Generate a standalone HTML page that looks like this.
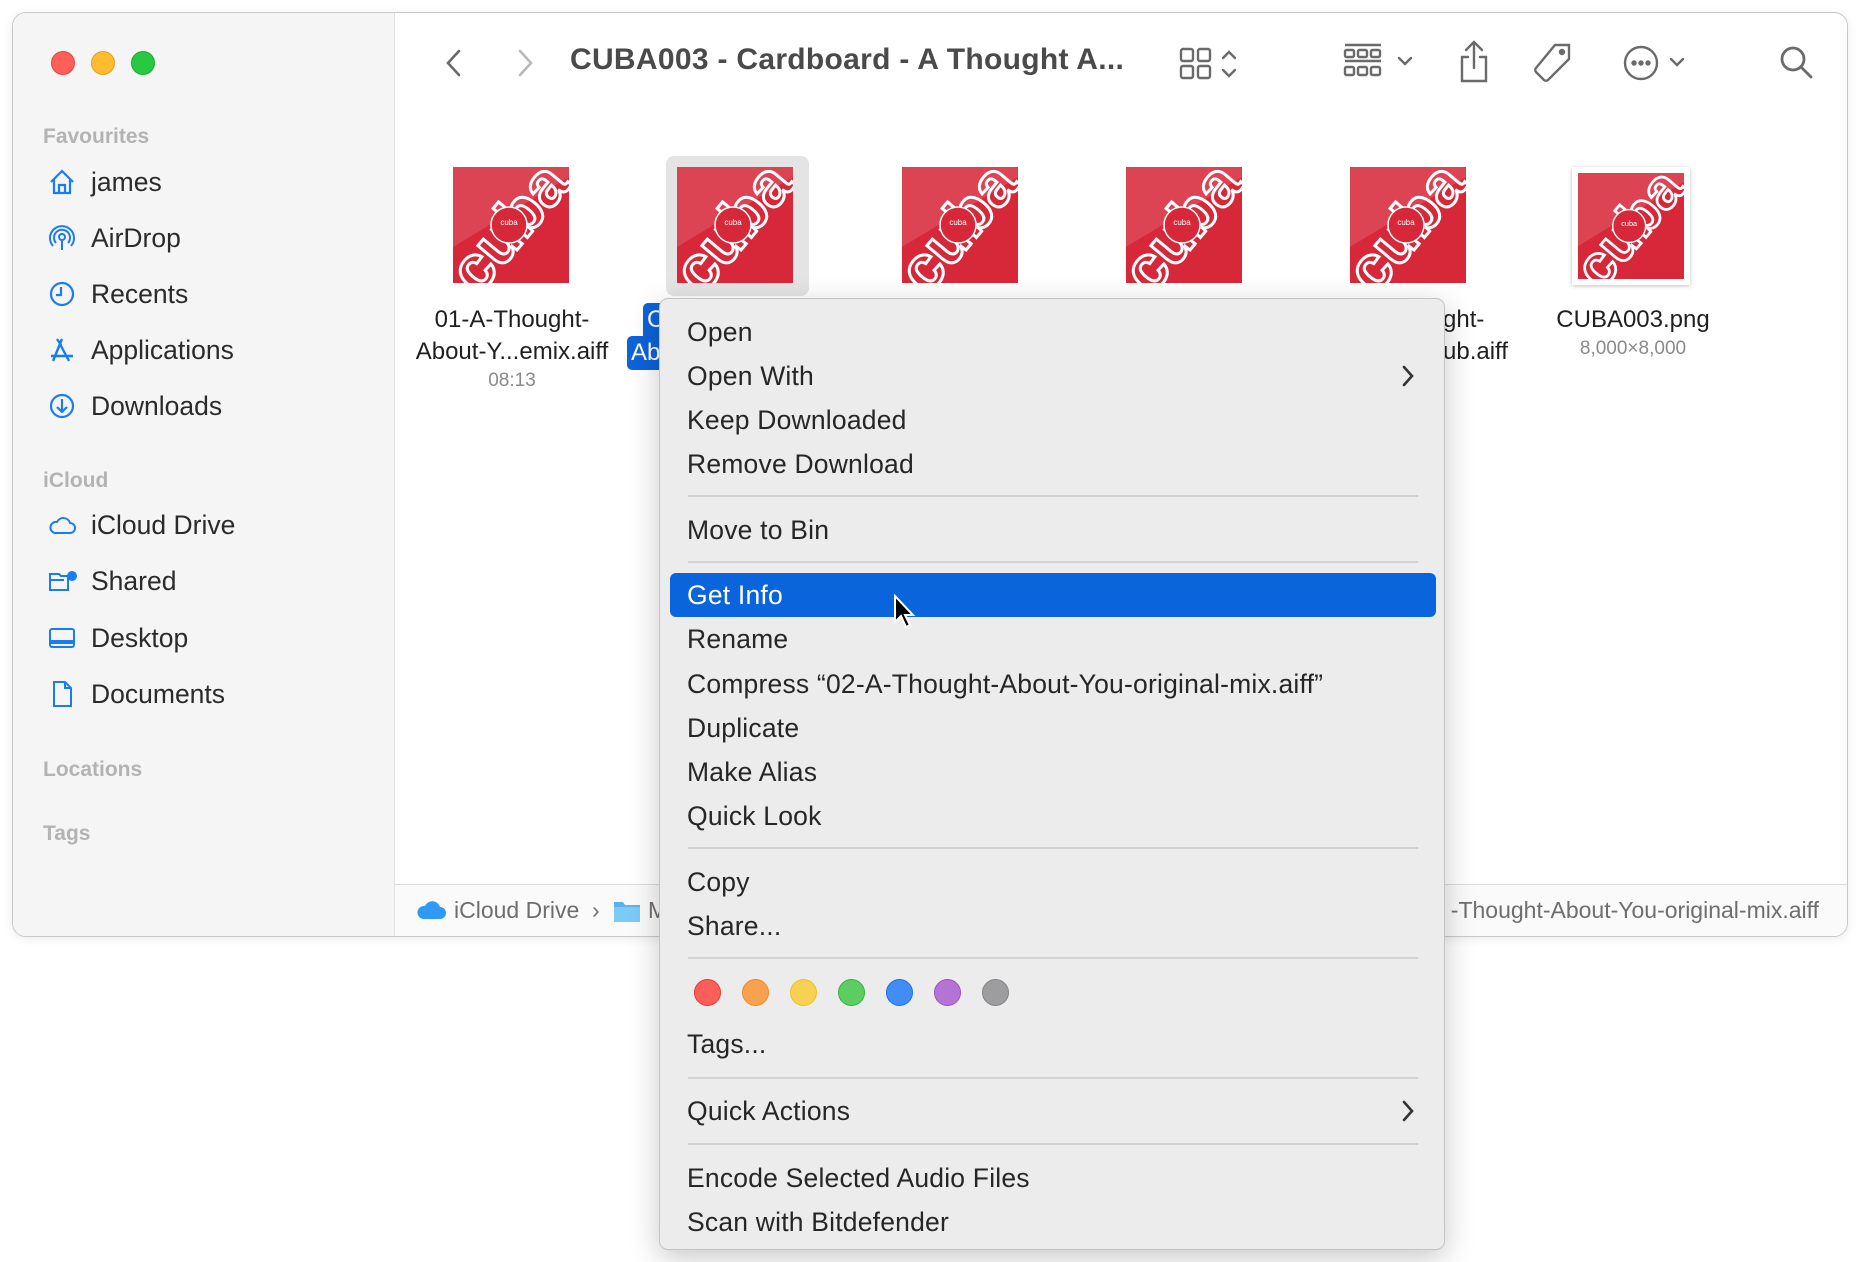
<!DOCTYPE html>
<html><head><meta charset="utf-8"><style>
*{margin:0;padding:0;box-sizing:border-box}
body{width:1860px;height:1262px;background:#fff;font-family:"Liberation Sans",sans-serif;position:relative;overflow:hidden;color:#262626}
.abs{position:absolute}
.win{left:12px;top:12px;width:1836px;height:925px;border:1px solid #c9c9c9;border-radius:14px;background:#fff;overflow:hidden;box-shadow:0 2px 10px rgba(0,0,0,.08)}
.side{left:0;top:0;width:382px;height:925px;background:#f5f5f5;border-right:1px solid #e2e2e2}
.dot{width:24px;height:24px;border-radius:50%}
.sh{font-size:21px;font-weight:bold;color:#b3b3b3;left:30px}
.si{font-size:26.5px;color:#2b2b2b;left:78px;line-height:30px}
.ic{left:34px;width:30px;height:30px}
.lbl{font-size:24px;color:#1f1f1f;text-align:center;line-height:32px}
.mi{position:absolute;left:27px;font-size:26.5px;letter-spacing:0.2px;line-height:30px;color:#262626}
.sep{position:absolute;left:28px;width:730px;height:2px;background:#d2d2d2}
.cd{position:absolute;width:27px;height:27px;border-radius:50%;top:979px}
</style></head><body>
<div class="abs win">
 <div class="abs side">
  <div class="abs dot" style="left:38px;top:38px;background:#fe5f57;border:1px solid #e0443e"></div>
  <div class="abs dot" style="left:78px;top:38px;background:#febc2e;border:1px solid #dea123"></div>
  <div class="abs dot" style="left:118px;top:38px;background:#28c840;border:1px solid #1aab29"></div>
  <div class="abs sh" style="top:112px">Favourites</div>
  <svg class="abs ic" style="top:154px" viewBox="0 0 30 30" fill="none" stroke="#1a7cf4" stroke-width="2.2"><path d="M4 15 L15 4 L26 15 M7 12 V26 H23 V12 M12 26 V18 H18 V26"/></svg>
  <div class="abs si" style="top:154px">james</div>
  <svg class="abs ic" style="top:210px" viewBox="0 0 30 30" fill="none" stroke="#1a7cf4" stroke-width="2"><circle cx="15" cy="14" r="3"/><path d="M9 20a8 8 0 1 1 12 0M6 23a12 12 0 1 1 18 0M15 17v10"/></svg>
  <div class="abs si" style="top:210px">AirDrop</div>
  <svg class="abs ic" style="top:266px" viewBox="0 0 30 30" fill="none" stroke="#1a7cf4" stroke-width="2.2"><circle cx="15" cy="15" r="11"/><path d="M14 8v8H9"/></svg>
  <div class="abs si" style="top:266px">Recents</div>
  <svg class="abs ic" style="top:322px" viewBox="0 0 30 30" fill="none" stroke="#1a7cf4" stroke-width="2.4"><path d="M15 4L6 26M13 9l9 17M4 21h22M10 4l4 6"/></svg>
  <div class="abs si" style="top:322px">Applications</div>
  <svg class="abs ic" style="top:378px" viewBox="0 0 30 30" fill="none" stroke="#1a7cf4" stroke-width="2.2"><circle cx="15" cy="15" r="11"/><path d="M15 8v13M10 16l5 5 5-5"/></svg>
  <div class="abs si" style="top:378px">Downloads</div>
  <div class="abs sh" style="top:456px">iCloud</div>
  <svg class="abs ic" style="top:497px" viewBox="0 0 30 30" fill="none" stroke="#1a7cf4" stroke-width="2"><path d="M8 23h15a5 5 0 0 0 0-10 7 7 0 0 0-13-1 5.5 5.5 0 0 0-2 11z"/></svg>
  <div class="abs si" style="top:497px">iCloud Drive</div>
  <svg class="abs ic" style="top:553px" viewBox="0 0 30 30" fill="none" stroke="#1a7cf4" stroke-width="2"><path d="M3 8h9l2 2h7v14H3zM3 14h14"/><circle cx="25" cy="10" r="4" fill="#1a7cf4"/></svg>
  <div class="abs si" style="top:553px">Shared</div>
  <svg class="abs ic" style="top:610px" viewBox="0 0 30 30" fill="none" stroke="#1a7cf4" stroke-width="2"><rect x="3" y="6" width="24" height="18" rx="2"/><path d="M3 19h24" stroke-width="4"/></svg>
  <div class="abs si" style="top:610px">Desktop</div>
  <svg class="abs ic" style="top:666px" viewBox="0 0 30 30" fill="none" stroke="#1a7cf4" stroke-width="2"><path d="M7 3h11l6 6v18H7zM18 3v6h6"/></svg>
  <div class="abs si" style="top:666px">Documents</div>
  <div class="abs sh" style="top:745px">Locations</div>
  <div class="abs sh" style="top:809px">Tags</div>
 </div>
 <svg class="abs" style="left:426px;top:32px" width="30" height="36" viewBox="0 0 30 36" fill="none" stroke="#6a6a6a" stroke-width="2.6" stroke-linecap="round"><path d="M20 6L9 18l11 12"/></svg>
 <svg class="abs" style="left:497px;top:32px" width="30" height="36" viewBox="0 0 30 36" fill="none" stroke="#b8b8b8" stroke-width="2.6" stroke-linecap="round"><path d="M10 6l11 12-11 12"/></svg>
 <div class="abs" style="left:557px;top:30px;font-size:30px;font-weight:bold;color:#4a4a4a;letter-spacing:0.3px">CUBA003 - Cardboard - A Thought A...</div>
 <svg class="abs" style="left:1166px;top:32px" width="90" height="40" viewBox="0 0 90 40" fill="none" stroke="#6a6a6a" stroke-width="2.4"><rect x="2" y="4" width="12" height="12" rx="2"/><rect x="19" y="4" width="12" height="12" rx="2"/><rect x="2" y="21" width="12" height="12" rx="2"/><rect x="19" y="21" width="12" height="12" rx="2"/><path d="M44 13l6-6 6 6M44 25l6 6 6-6" stroke-linecap="round"/></svg>
 <svg class="abs" style="left:1330px;top:28px" width="90" height="44" viewBox="0 0 90 44" fill="none" stroke="#6a6a6a" stroke-width="2.4"><path d="M2 4h36M2 20h36"/><rect x="2" y="9" width="9" height="7" rx="1.5"/><rect x="15" y="9" width="9" height="7" rx="1.5"/><rect x="28" y="9" width="9" height="7" rx="1.5"/><rect x="2" y="26" width="9" height="8" rx="1.5"/><rect x="15" y="26" width="9" height="8" rx="1.5"/><rect x="28" y="26" width="9" height="8" rx="1.5"/><path d="M56 17l6 6 6-6" stroke-linecap="round"/></svg>
 <svg class="abs" style="left:1444px;top:26px" width="34" height="46" viewBox="0 0 34 46" fill="none" stroke="#6a6a6a" stroke-width="2.4" stroke-linecap="round"><path d="M17 3v26M9 11l8-8 8 8M11 18H5v24h24V18h-6"/></svg>
 <svg class="abs" style="left:1518px;top:28px" width="44" height="44" viewBox="0 0 44 44" fill="none" stroke="#6a6a6a" stroke-width="2.4"><path d="M24 4h14v14L17 39a3 3 0 0 1-4 0L5 31a3 3 0 0 1 0-4z"/><circle cx="31" cy="11" r="2" fill="#6a6a6a"/></svg>
 <svg class="abs" style="left:1606px;top:28px" width="90" height="44" viewBox="0 0 90 44" fill="none" stroke="#6a6a6a" stroke-width="2.4"><circle cx="22" cy="22" r="16"/><circle cx="15" cy="22" r="1.5" fill="#6a6a6a"/><circle cx="22" cy="22" r="1.5" fill="#6a6a6a"/><circle cx="29" cy="22" r="1.5" fill="#6a6a6a"/><path d="M52 18l6 6 6-6" stroke-linecap="round"/></svg>
 <svg class="abs" style="left:1764px;top:30px" width="40" height="40" viewBox="0 0 40 40" fill="none" stroke="#6a6a6a" stroke-width="2.8" stroke-linecap="round"><circle cx="16" cy="16" r="11"/><path d="M24 24l10 10"/></svg>
 <div class="abs" style="left:653px;top:143px;width:143px;height:140px;background:#e4e4e4;border-radius:8px"></div>
 <div class="abs lbl" style="left:394px;top:291px;width:210px">01-A-Thought-<br>About-Y...emix.aiff</div>
 <div class="abs" style="left:399px;top:357px;width:200px;text-align:center;font-size:19px;color:#8a8a8a">08:13</div>
 <div class="abs" style="left:630px;top:290px;width:30px;height:34px;background:#0d63d9;border-radius:5px 5px 0 0;color:#fff;font-size:24px;line-height:34px;padding-left:4px">C</div>
 <div class="abs" style="left:614px;top:323px;width:46px;height:34px;background:#0d63d9;border-radius:5px;color:#fff;font-size:24px;line-height:34px;padding-left:4px">Ab</div>
 <div class="abs lbl" style="left:1430px;top:291px;text-align:left">ght-<br>ub.aiff</div>
 <div class="abs lbl" style="left:1520px;top:291px;width:200px">CUBA003.png</div>
 <div class="abs" style="left:1520px;top:325px;width:200px;text-align:center;font-size:19px;color:#8a8a8a">8,000×8,000</div>
 <div class="abs" style="left:382px;top:871px;width:1454px;height:54px;border-top:1px solid #dcdcdc;background:#fafafa"></div>
 <svg class="abs" style="left:404px;top:886px" width="30" height="22" viewBox="0 0 30 22"><path d="M6 20h17a6 6 0 0 0 0-12 8 8 0 0 0-15-1 6.5 6.5 0 0 0-2 13z" fill="#2e9af5"/></svg>
 <div class="abs" style="left:441px;top:884px;font-size:23px;color:#6e6e6e">iCloud Drive &nbsp;›</div>
 <svg class="abs" style="left:600px;top:886px" width="28" height="24" viewBox="0 0 28 24"><path d="M1 3h9l2 3h15v17H1z" fill="#5ab3ef"/><path d="M1 8h26v15H1z" fill="#7ccaf6"/></svg>
 <div class="abs" style="left:635px;top:884px;font-size:23px;color:#6e6e6e">M</div>
 <div class="abs" style="right:28px;top:884px;font-size:23px;color:#6e6e6e;white-space:nowrap">-Thought-About-You-original-mix.aiff</div>
</div>
<div class="abs" style="left:659px;top:298px;width:786px;height:952px;background:#ececec;border:1px solid #c4c4c4;border-radius:9px;box-shadow:0 8px 30px rgba(0,0,0,.22)">
 <div class="mi" style="top:18px">Open</div>
 <div class="mi" style="top:62px">Open With</div>
 <div class="mi" style="top:106px">Keep Downloaded</div>
 <div class="mi" style="top:150px">Remove Download</div>
 <div class="sep" style="top:196px"></div>
 <div class="mi" style="top:216px">Move to Bin</div>
 <div class="sep" style="top:262px"></div>
 <div class="abs" style="left:10px;top:274px;width:766px;height:44px;background:#0a64db;border-radius:6px"></div>
 <div class="mi" style="top:281px;color:#fff">Get Info</div>
 <div class="mi" style="top:325px">Rename</div>
 <div class="mi" style="top:370px;white-space:nowrap">Compress “02-A-Thought-About-You-original-mix.aiff”</div>
 <div class="mi" style="top:414px">Duplicate</div>
 <div class="mi" style="top:458px">Make Alias</div>
 <div class="mi" style="top:502px">Quick Look</div>
 <div class="sep" style="top:548px"></div>
 <div class="mi" style="top:568px">Copy</div>
 <div class="mi" style="top:612px">Share...</div>
 <div class="sep" style="top:658px"></div>
 <div class="mi" style="top:730px">Tags...</div>
 <div class="sep" style="top:778px"></div>
 <div class="mi" style="top:797px">Quick Actions</div>
 <div class="sep" style="top:844px"></div>
 <div class="mi" style="top:864px">Encode Selected Audio Files</div>
 <div class="mi" style="top:908px">Scan with Bitdefender</div>
 <svg class="abs" style="left:740px;top:63px" width="16" height="28" viewBox="0 0 16 28" fill="none" stroke="#333" stroke-width="2.6" stroke-linecap="round"><path d="M4 5l8 9-8 9"/></svg>
 <svg class="abs" style="left:740px;top:798px" width="16" height="28" viewBox="0 0 16 28" fill="none" stroke="#333" stroke-width="2.6" stroke-linecap="round"><path d="M4 5l8 9-8 9"/></svg>
</div>
<div class="cd" style="left:694px;background:#fb5f58;border:1.5px solid #e83a33"></div>
<div class="cd" style="left:742px;background:#f8a24f;border:1.5px solid #f08a20"></div>
<div class="cd" style="left:790px;background:#f8d153;border:1.5px solid #efbf20"></div>
<div class="cd" style="left:838px;background:#5dcd62;border:1.5px solid #2fb53a"></div>
<div class="cd" style="left:886px;background:#428cf6;border:1.5px solid #1a6fe8"></div>
<div class="cd" style="left:934px;background:#b574d4;border:1.5px solid #9d4fcc"></div>
<div class="cd" style="left:982px;background:#9d9d9f;border:1.5px solid #848486"></div>
<svg class="abs" style="left:893px;top:594px" width="24" height="36" viewBox="0 0 24 36"><path d="M2 2v26l6-6 5 11 4-2-5-10h8z" fill="#000" stroke="#fff" stroke-width="2"/></svg>
<svg width="0" height="0" style="position:absolute"><defs>
<g id="cv"><rect width="116" height="116" fill="#d62839"/><path d="M0 0h116v10L0 80z" fill="#e05566" opacity=".6"/>
<g transform="translate(58 62) rotate(-50)"><text x="0" y="18" text-anchor="middle" font-family="Liberation Sans" font-weight="bold" font-size="62" fill="none" stroke="#fff" stroke-width="3">cuba</text></g>
<circle cx="56" cy="58" r="18" fill="#d62839" stroke="#fff" stroke-width="1.5"/><text x="56" y="58" text-anchor="middle" font-family="Liberation Sans" font-size="8" fill="#fff">cuba</text></g>
</defs></svg>
<svg class="abs" style="left:453px;top:167px" width="116" height="116"><use href="#cv"/></svg>
<svg class="abs" style="left:677px;top:167px" width="116" height="116"><use href="#cv"/></svg>
<svg class="abs" style="left:902px;top:167px" width="116" height="116"><use href="#cv"/></svg>
<svg class="abs" style="left:1126px;top:167px" width="116" height="116"><use href="#cv"/></svg>
<svg class="abs" style="left:1350px;top:167px" width="116" height="116"><use href="#cv"/></svg>
<div class="abs" style="left:1572px;top:167px;width:118px;height:118px;background:#fff;box-shadow:0 1px 4px rgba(0,0,0,.25)"></div>
<svg class="abs" style="left:1578px;top:173px" width="106" height="106" viewBox="0 0 116 116"><use href="#cv"/></svg>
</body></html>
